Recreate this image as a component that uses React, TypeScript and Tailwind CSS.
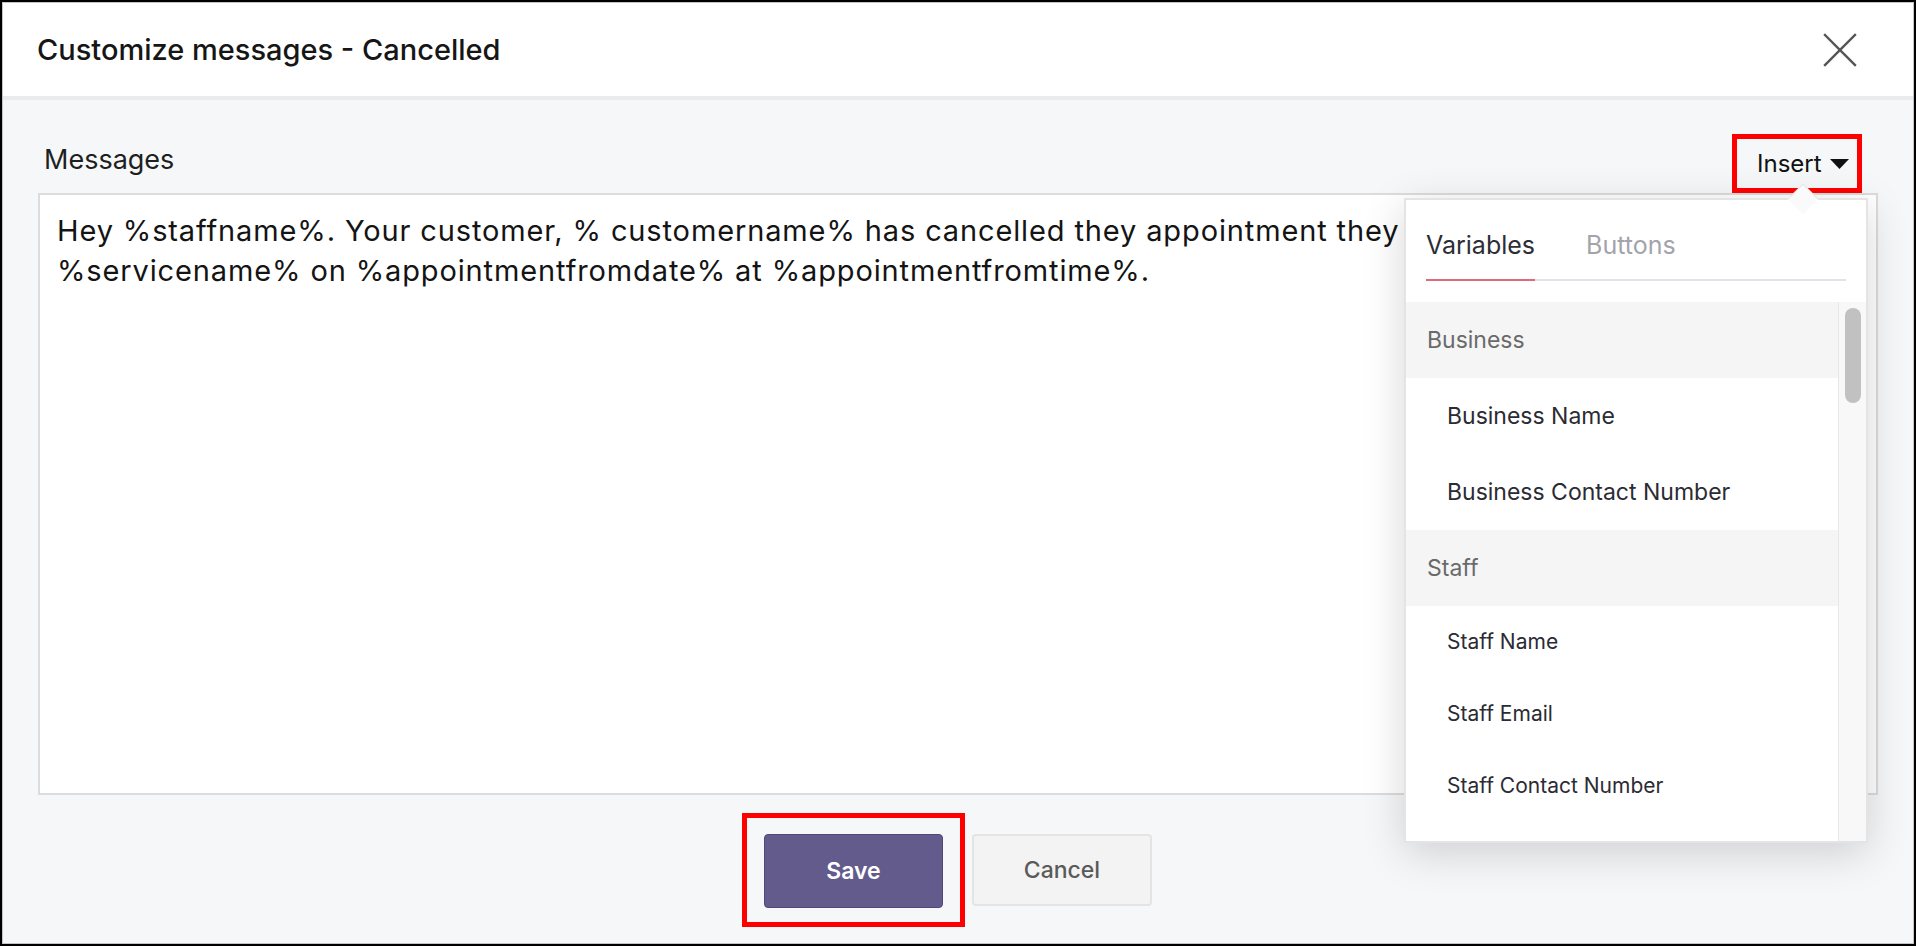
export default function App() {
  return (
    <div className="relative w-[1916px] h-[946px] overflow-hidden border-2 border-black bg-white font-['Inter',sans-serif]">
      <div className="flex h-full flex-col border border-[#c4c4c4]">
        <header className="flex h-[97px] shrink-0 items-center justify-between border-b-4 border-[#ebebeb] bg-white pl-[34px] pr-[56px]">
          <h1 className="text-[29px] font-medium leading-[40px] text-[#161616]">Customize messages - Cancelled</h1>
          <svg width="34" height="34" viewBox="0 0 34 34" fill="none" stroke="#555" strokeWidth="2.4" strokeLinecap="square">
            <line x1="2" y1="2" x2="32" y2="32" />
            <line x1="32" y1="2" x2="2" y2="32" />
          </svg>
        </header>

        <main className="flex flex-1 flex-col bg-[#f6f7f9] px-[35px]">
          <div className="flex h-[93px] items-end justify-between">
            <span className="mb-[13px] ml-[6px] text-[27px] leading-[40px] text-[#1f1f1f]">Messages</span>
            <button className="mr-[16px] flex h-[59px] w-[130px] items-center gap-[8px] border-[5px] border-[#ff0000] pl-[20px] text-[24px] leading-none text-[#111]">
              Insert
              <svg width="19" height="10" viewBox="0 0 19 10">
                <path d="M0 0 L19 0 L9.5 10 Z" fill="#111" />
              </svg>
            </button>
          </div>

          <div className="h-[602px] overflow-hidden border-2 border-[#dcdcdc] bg-white pl-[17px] pt-[16px] text-[29px] leading-[40px] tracking-[0.03em] text-[#141414]">
            <div className="whitespace-nowrap">Hey %staffname%. Your customer, % customername% has cancelled they appointment they</div>
            <div className="whitespace-nowrap">%servicename% on %appointmentfromdate% at %appointmentfromtime%.</div>
          </div>

          <div className="flex justify-center gap-[29px] pt-[39px]">
            <button className="relative h-[74px] w-[179px] rounded-[4px] border border-[#4f4879] bg-[#625b8c] text-[23px] font-semibold text-white">
              Save
              <span className="pointer-events-none absolute -top-[22px] -bottom-[20px] -left-[23px] -right-[23px] border-[5px] border-[#ff0000]" />
            </button>
            <button className="h-[72px] w-[180px] rounded-[4px] border-2 border-[#e4e4e4] bg-[#f3f3f3] text-[23px] font-medium text-[#5a5a5a]">
              Cancel
            </button>
          </div>
        </main>
      </div>

      {/* Insert dropdown */}
      <div className="absolute left-[1402px] top-[196px] flex h-[645px] w-[464px] flex-col border-2 border-[#e4e4e4] bg-white shadow-[0_10px_40px_rgba(0,0,0,0.16)]">
        <span className="absolute -top-[12px] left-[386px] h-[22px] w-[22px] rotate-45 border-l border-t border-[#e6e6e6] bg-[#fafafa]" />
        <div className="relative mx-[20px] mt-[29px] flex gap-[51px] border-b-2 border-[#e1e3e9]">
          <span className="-mb-[2px] border-b-2 border-[#e06a78] pb-[18px] text-[25px] leading-[32px] text-[#2d2d35]">Variables</span>
          <span className="pb-[18px] text-[25px] leading-[32px] text-[#a3a3ab]">Buttons</span>
        </div>
        <div className="mt-[21px] flex min-h-0 flex-1">
          <div className="flex flex-1 flex-col overflow-hidden">
            <div className="flex h-[76px] shrink-0 items-center bg-[#f5f5f5] pl-[21px] text-[23px] text-[#6a6a6a]">Business</div>
            <div className="flex h-[76px] shrink-0 items-center pl-[41px] text-[23px] text-[#2b2b33]">Business Name</div>
            <div className="flex h-[76px] shrink-0 items-center pl-[41px] text-[23px] text-[#2b2b33]">Business Contact Number</div>
            <div className="flex h-[76px] shrink-0 items-center bg-[#f5f5f5] pl-[21px] text-[23px] text-[#6a6a6a]">Staff</div>
            <div className="flex h-[72px] shrink-0 items-center pl-[41px] text-[21px] text-[#2b2b33]">Staff Name</div>
            <div className="flex h-[72px] shrink-0 items-center pl-[41px] text-[21px] text-[#2b2b33]">Staff Email</div>
            <div className="flex h-[72px] shrink-0 items-center pl-[41px] text-[21px] text-[#2b2b33]">Staff Contact Number</div>
          </div>
          <div className="relative w-[28px] shrink-0 border-l border-[#e8e8e8] bg-[#f8f8f8]">
            <div className="absolute left-[6px] top-[6px] h-[95px] w-[16px] rounded-full bg-[#c1c1c1]" />
          </div>
        </div>
      </div>
    </div>
  );
}
